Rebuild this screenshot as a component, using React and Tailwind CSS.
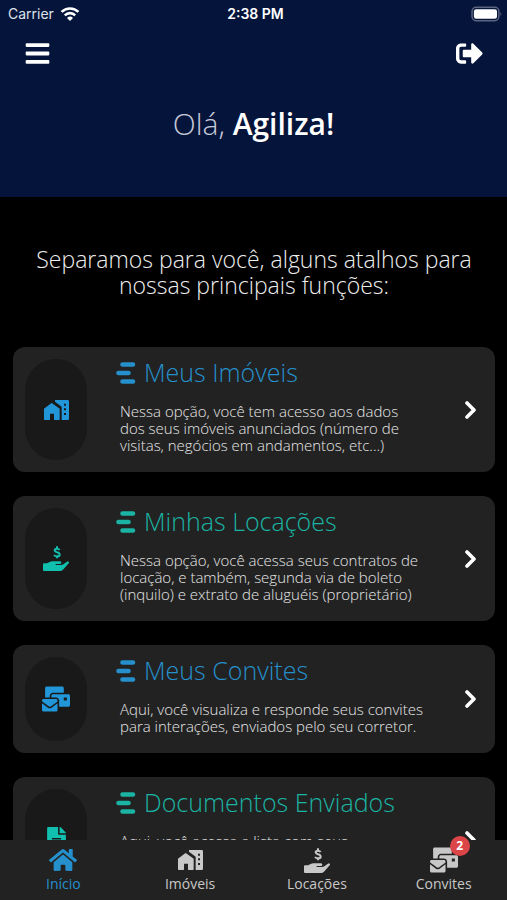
import { FaBars, FaFileAlt, FaHome, FaMailBulk, FaSignOutAlt } from "react-icons/fa";

function HomeWorkIcon({ size }) {
  return (
    <svg viewBox="0 0 75 60" width={size} fill="currentColor" strokeLinejoin="round" aria-hidden="true">
      <path d="M2 58V27L23 11l22 16v31H32V39H16v19z" stroke="currentColor" strokeWidth="4" />
      <path fillRule="evenodd" d="M33 0h38q4 0 4 4v52q0 4-4 4H53V20L33 5zM60 11v6h6v-6zm0 14v6h6v-6zm0 14v6h6v-6z" />
    </svg>
  );
}

function HandMoneyIcon({ size }) {
  return (
    <svg viewBox="0 0 78 75" width={size} fill="currentColor" aria-hidden="true">
      <path d="M0 55q0-3 3-3h9l8-4q4-2 8-2h22q5 0 5 4t-5 4H38v3h16q4 0 7-2l11-8q3-2 5 0t0 5L60 71q-4 4-9 4H3q-3 0-3-3z" />
      <path d="M50 12q-3-4-8-4-7 0-7 5 0 4 7 6 8 2 8 7 0 5-8 5-6 0-9-4M42 1v7m0 23v6" fill="none" stroke="currentColor" strokeWidth="6" />
    </svg>
  );
}

const shortcuts = [
  {
    title: "Meus Imóveis",
    tone: "text-[#2590cc]",
    iconTone: "text-[#2196d8]",
    Icon: HomeWorkIcon,
    size: 25,
    lines: ["Nessa opção, você tem acesso aos dados", "dos seus imóveis anunciados (número de", "visitas, negócios em andamentos, etc...)"],
  },
  {
    title: "Minhas Locações",
    tone: "text-[#1bb3a3]",
    iconTone: "text-[#10bfae]",
    Icon: HandMoneyIcon,
    size: 26,
    lines: ["Nessa opção, você acessa seus contratos de", "locação, e também, segunda via de boleto", "(inquilo) e extrato de aluguéis (proprietário)"],
  },
  {
    title: "Meus Convites",
    tone: "text-[#2590cc]",
    iconTone: "text-[#2196d8]",
    Icon: FaMailBulk,
    size: 28,
    lines: ["Aqui, você visualiza e responde seus convites", "para interações, enviados pelo seu corretor."],
  },
  {
    title: "Documentos Enviados",
    tone: "text-[#1bb3a3]",
    iconTone: "text-[#10bfae]",
    Icon: FaFileAlt,
    size: 25,
    lines: ["Aqui, você acessa a lista com seus", "documentos enviados e acompanha", "a situação de cada um."],
  },
];

const tabs = [
  { label: "Início", Icon: FaHome, size: 28, active: true },
  { label: "Imóveis", Icon: HomeWorkIcon, size: 25 },
  { label: "Locações", Icon: HandMoneyIcon, size: 26 },
  { label: "Convites", Icon: FaMailBulk, size: 28, badge: 2 },
];

function WifiMark() {
  return (
    <svg viewBox="0 0 20 15" className="h-4 w-5" fill="none" stroke="white" strokeWidth="2.6" aria-hidden="true">
      <path d="M1.6 5.4a12 12 0 0 1 16.8 0" />
      <path d="M4.8 8.8a7.4 7.4 0 0 1 10.4 0" />
      <path d="M10 14.4 7 11.4a4.3 4.3 0 0 1 6 0z" fill="white" stroke="none" />
    </svg>
  );
}

function BatteryMark() {
  return (
    <svg viewBox="0 0 31 15" className="h-4 w-8" aria-hidden="true">
      <rect x="1" y="1" width="26" height="13" rx="4" fill="none" stroke="#5c6580" strokeWidth="1.4" />
      <rect x="2.8" y="2.8" width="22.4" height="9.4" rx="2.2" fill="white" />
      <path d="M28.5 5.5q2 2 0 4z" fill="#5c6580" />
    </svg>
  );
}

function BrandMark() {
  return (
    <svg viewBox="0 0 20 22" className="h-6 w-5 shrink-0" stroke="currentColor" strokeWidth="4.6" strokeLinecap="round" aria-hidden="true">
      <path d="M6.5 2.5h10.5M2.5 11h10M6.5 19.5h10.5" />
    </svg>
  );
}

function Chevron() {
  return (
    <svg viewBox="0 0 12 18" className="h-[18px] w-3" fill="none" stroke="currentColor" strokeWidth="3.6" aria-hidden="true">
      <path d="M2 2l7 7-7 7" strokeLinejoin="round" strokeLinecap="round" />
    </svg>
  );
}

function ShortcutCard({ title, tone, iconTone, Icon, size, lines }) {
  return (
    <li>
      <button type="button" className="flex w-full rounded-xl bg-[#222] p-3 text-left">
        <span className={`flex w-[62px] shrink-0 items-center justify-center rounded-[31px] bg-[#191919] ${iconTone}`}>
          <Icon size={size} />
        </span>
        <span className="ml-[29px] min-w-0 flex-1 pb-1.5">
          <span className={`flex h-7 items-center gap-2 text-[25px] font-light ${tone}`}>
            <BrandMark />
            <span className="whitespace-nowrap">{title}</span>
          </span>
          <span className="mt-4 block whitespace-pre-line pl-1 text-[15px] leading-[17px] font-light text-[#e8e8e8]">
            {lines.join("\n")}
          </span>
        </span>
        <span className="flex w-6 items-center justify-center self-stretch text-white">
          <Chevron />
        </span>
      </button>
    </li>
  );
}

export default function App() {
  return (
    <div className="flex h-screen flex-col overflow-hidden bg-black font-['Open_Sans',sans-serif]">
      <header className="shrink-0 bg-[#05143b] pb-[55px] text-white">
        <div className="grid h-7 grid-cols-[1fr_auto_1fr] items-center pr-1 pl-2 font-['Inter',sans-serif] text-sm">
          <div className="flex items-center gap-1.5 text-[#dfe2ea]">
            <span>Carrier</span>
            <WifiMark />
          </div>
          <span className="text-center font-semibold">2:38 PM</span>
          <div className="flex justify-end">
            <BatteryMark />
          </div>
        </div>
        <div className="flex h-[50px] items-center justify-between px-6">
          <button type="button" aria-label="Menu"><FaBars size={27} /></button>
          <button type="button" aria-label="Sair"><FaSignOutAlt size={27} /></button>
        </div>
        <h1 className="mt-7 text-center text-3xl leading-9 font-light text-[#c5cad8]">
          Olá, <strong className="font-semibold text-white">Agiliza!</strong>
        </h1>
      </header>
      <main className="min-h-0 flex-1 overflow-hidden pr-3 pl-[13px]">
        <p className="my-[49px] whitespace-pre-line text-center text-[23px] leading-[26px] font-light text-[#eee]">
          {"Separamos para você, alguns atalhos para\nnossas principais funções:"}
        </p>
        <ul className="flex flex-col gap-6">
          {shortcuts.map((item) => (
            <ShortcutCard key={item.title} {...item} />
          ))}
        </ul>
      </main>
      <nav className="grid h-[60px] shrink-0 grid-cols-4 bg-[#222]">
        {tabs.map(({ label, Icon, size, active, badge }) => (
          <a key={label} href="#" className={`flex flex-col items-center pt-1 text-sm ${active ? "text-[#2590cc]" : "text-[#c8c8c8]"}`}>
            <span className="relative flex h-8 items-center">
              <Icon size={size} />
              {badge && (
                <span className="absolute -top-2 -right-3 flex size-5 items-center justify-center rounded-full bg-[#dc4548] text-xs font-bold text-white">{badge}</span>
              )}
            </span>
            <span className="leading-4">{label}</span>
          </a>
        ))}
      </nav>
    </div>
  );
}
